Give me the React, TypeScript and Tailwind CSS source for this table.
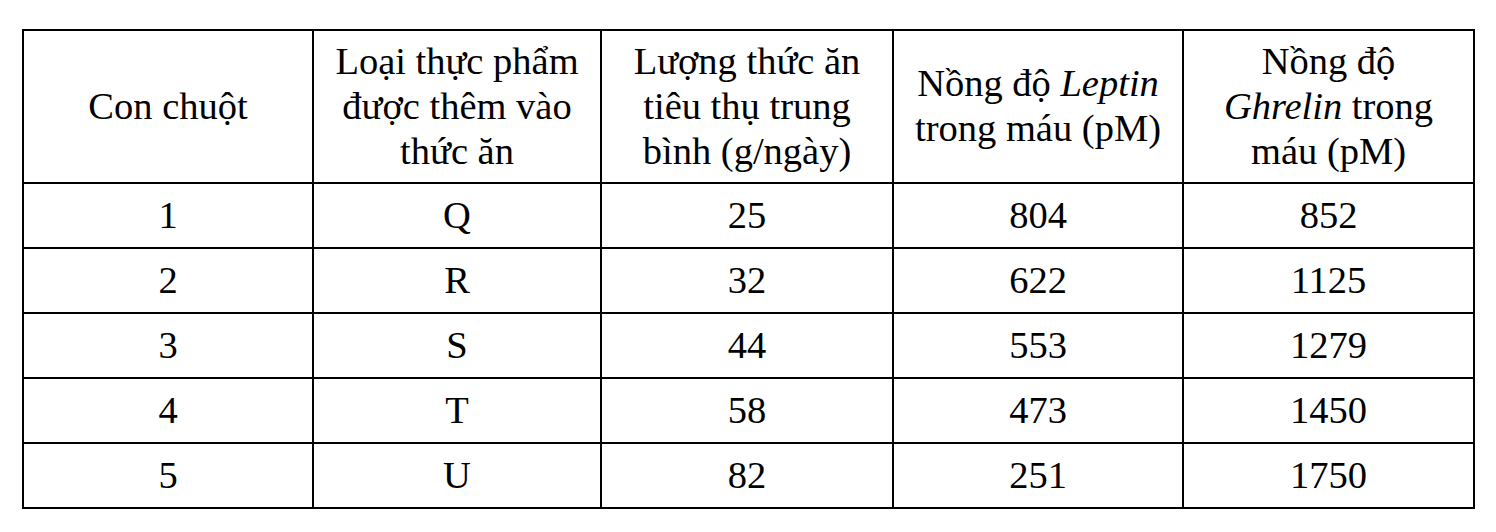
import React from "react";

const rows = [
  ["1", "Q", "25", "804", "852"],
  ["2", "R", "32", "622", "1125"],
  ["3", "S", "44", "553", "1279"],
  ["4", "T", "58", "473", "1450"],
  ["5", "U", "82", "251", "1750"],
];

const serif = "font-['Liberation_Serif','Times_New_Roman',serif]";

export default function App() {
  const th =
    `${serif} border-2 border-black text-center align-middle font-normal whitespace-nowrap p-0 pb-px text-[38.5px] leading-[45px] text-black`;
  const td = `${serif} border-2 border-black text-center align-middle whitespace-nowrap p-0 text-[38.5px] leading-[45px] text-black`;
  return (
    <div className={`w-[1496px] h-[532px] bg-white text-black pt-[29px] pl-[22px] ${serif}`}>
      <table
        className={`border-collapse table-fixed w-[1451px] text-[38.5px] leading-[45px] ${serif}`}
      >
        <colgroup>
          <col className="w-[290px]" />
          <col className="w-[288px]" />
          <col className="w-[292px]" />
          <col className="w-[290px]" />
          <col className="w-[291px]" />
        </colgroup>
        <thead>
          <tr className="h-[153px]">
            <th className={th}>Con chuột</th>
            <th className={th}>
              Loại thực phẩm
              <br />
              được thêm vào
              <br />
              thức ăn
            </th>
            <th className={th}>
              Lượng thức ăn
              <br />
              tiêu thụ trung
              <br />
              bình (g/ngày)
            </th>
            <th className={th}>
              Nồng độ <i className={serif}>Leptin</i>
              <br />
              trong máu (pM)
            </th>
            <th className={th}>
              Nồng độ
              <br />
              <i className={serif}>Ghrelin</i> trong
              <br />
              máu (pM)
            </th>
          </tr>
        </thead>
        <tbody>
          {rows.map((r) => (
            <tr key={r[0]} className="h-[65px]">
              {r.map((c, i) => (
                <td key={i} className={td}>
                  {c}
                </td>
              ))}
            </tr>
          ))}
        </tbody>
      </table>
    </div>
  );
}
